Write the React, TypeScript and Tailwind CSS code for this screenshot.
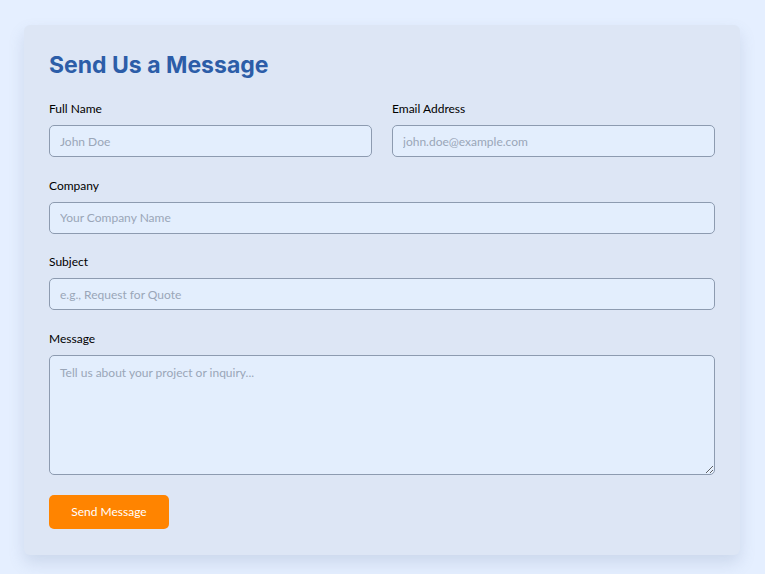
const fieldClass =
  "w-full h-8 px-[10px] rounded-[5px] border border-[#8d9bb0] bg-[#e3eefd] text-[12px] text-gray-800 placeholder:text-[#9aa6b8] outline-none";

const Label = ({ children }: { children: string }) => (
  <label className="block mb-2 h-4 leading-4 text-[12px] text-black">{children}</label>
);

const ContactForm = () => {
  return (
    <div
      className="min-h-screen bg-[#e5efff] px-6 pt-[25px] pb-5"
      style={{ fontFamily: "Lato, 'Noto Sans', sans-serif" }}
    >
      <div className="w-[716px] bg-[#dde6f5] rounded-md shadow-[0_8px_16px_rgba(90,110,150,0.18)] px-[25px] pt-[24px] pb-[26px]">
        <h2
          className="text-[23px] leading-8 font-bold text-[#2c5da8] mb-5"
          style={{ fontFamily: "Inter, sans-serif" }}
        >
          Send Us a Message
        </h2>

        <form className="flex flex-col gap-[20.5px]">
          <div className="grid grid-cols-2 gap-5">
            <div>
              <Label>Full Name</Label>
              <input type="text" placeholder="John Doe" className={fieldClass} />
            </div>
            <div>
              <Label>Email Address</Label>
              <input type="email" placeholder="john.doe@example.com" className={fieldClass} />
            </div>
          </div>

          <div>
            <Label>Company</Label>
            <input type="text" placeholder="Your Company Name" className={fieldClass} />
          </div>

          <div>
            <Label>Subject</Label>
            <input type="text" placeholder="e.g., Request for Quote" className={fieldClass} />
          </div>

          <div>
            <Label>Message</Label>
            <textarea
              placeholder="Tell us about your project or inquiry..."
              className="block w-full h-[120px] px-[10px] py-2 rounded-[5px] border border-[#8d9bb0] bg-[#e3eefd] text-[12px] text-gray-800 placeholder:text-[#9aa6b8] outline-none"
            />
          </div>

          <div>
            <button
              type="button"
              className="w-[120px] h-[34px] rounded-[5px] bg-[#ff8400] text-white text-[12px]"
            >
              Send Message
            </button>
          </div>
        </form>
      </div>
    </div>
  );
};

export default ContactForm;
